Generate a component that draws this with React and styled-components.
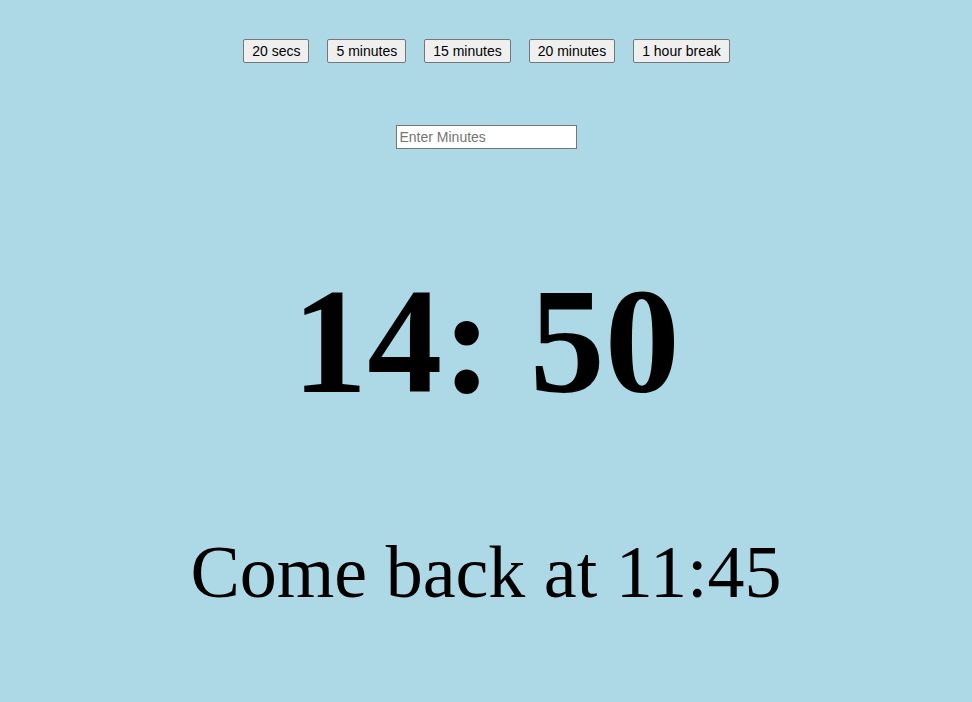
import React, { useState } from 'react';
import styled, { createGlobalStyle } from 'styled-components';

const GlobalStyle = createGlobalStyle`
	html, body {
		margin: 0;
		padding: 0;
		background: #add8e6;
	}
	body {
		font-family: "Liberation Serif", "Times New Roman", serif;
		min-height: 702px;
	}
`

const Page = styled.div`
	display: flex;
	flex-direction: column;
	align-items: center;
	padding-top: 39px;
	min-height: 702px;
	box-sizing: border-box;
`

const Presets = styled.div`
	display: flex;
	justify-content: center;
	gap: 18px;
	padding-left: 1px;
`

const Preset = styled.button`
	font-family: "Liberation Sans", Arial, sans-serif;
	font-size: 14px;
	line-height: 16px;
	color: #000;
	background: #efefef;
	border: 1px solid #767676;
	border-radius: 2px;
	padding: 3px 8px;
	cursor: pointer;
`

const MinutesInput = styled.input`
	margin-top: 62px;
	width: 181px;
	height: 24px;
	box-sizing: border-box;
	font-family: "Liberation Sans", Arial, sans-serif;
	font-size: 14px;
	padding: 1px 3px;
	border: 1px solid #767676;
	background: #fff;
	&::placeholder {
		color: #757575;
	}
`

const Countdown = styled.h1`
	margin: 117px 0 0 0;
	font-family: "Liberation Serif", "Times New Roman", serif;
	font-weight: bold;
	font-size: 150px;
	line-height: 150px;
	color: #000;
`

const ReturnAt = styled.p`
	margin: 116px 0 0 0;
	font-family: "Liberation Serif", "Times New Roman", serif;
	font-size: 74px;
	line-height: 80px;
	color: #000;
`

const presets = ['20 secs', '5 minutes', '15 minutes', '20 minutes', '1 hour break']

const App = () => {
	const [minutes, setMinutes] = useState('')
	return (
		<Page>
			<GlobalStyle />
			<Presets>
				{presets.map(p => (
					<Preset key={p}>{p}</Preset>
				))}
			</Presets>
			<MinutesInput
				placeholder="Enter Minutes"
				value={minutes}
				onChange={e => setMinutes(e.target.value)}
			/>
			<Countdown>14: 50</Countdown>
			<ReturnAt>Come back at 11:45</ReturnAt>
		</Page>
	)
}

export default App
